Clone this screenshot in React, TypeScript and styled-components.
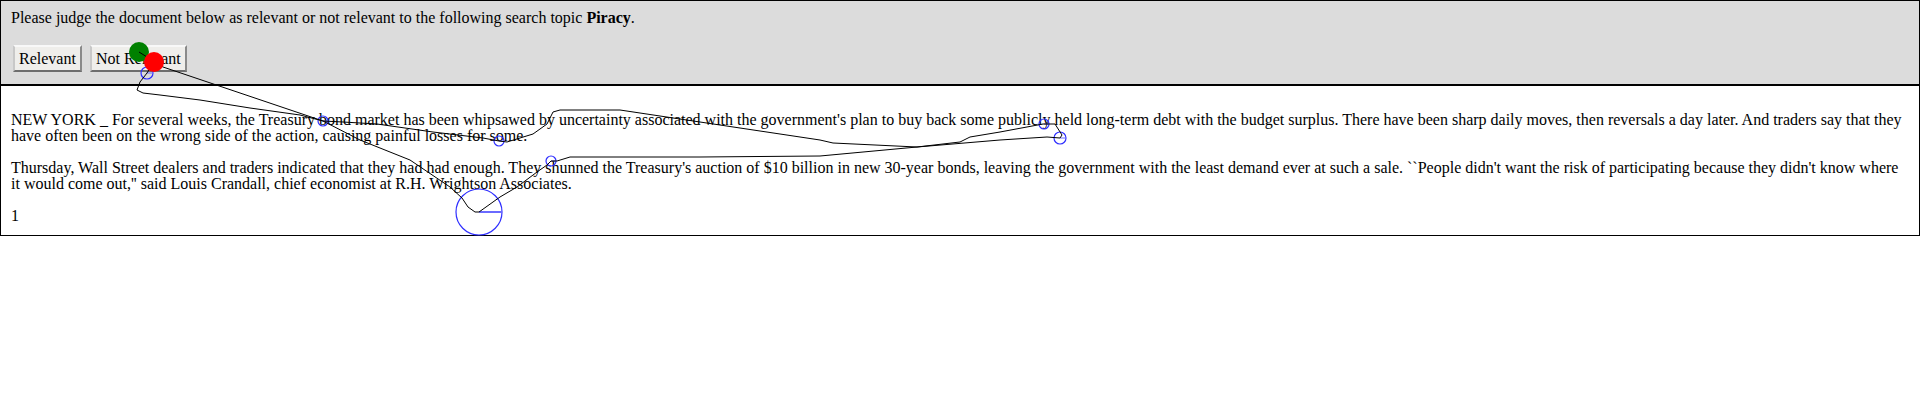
import React from "react";
import styled, { createGlobalStyle } from "styled-components";

const GlobalStyle = createGlobalStyle`
  html, body {
    margin: 0;
    padding: 0;
    background: #ffffff;
  }
  body {
    font-family: "Liberation Serif", "Times New Roman", serif;
    font-size: 16px;
    line-height: 16px;
    color: #000000;
  }
`;

const Page = styled.div`
  position: relative;
  width: 1920px;
  min-height: 411px;
`;

const JudgePanel = styled.div`
  background: #dcdcdc;
  border: 1px solid #000000;
  padding: 9px 10px 12px;
`;

const Prompt = styled.div`
  line-height: 16px;
`;

const ButtonRow = styled.div`
  display: flex;
  gap: 8px;
  margin-top: 19px;
  padding-left: 2px;
`;

const JudgeButton = styled.button`
  box-sizing: border-box;
  height: 27px;
  padding: 0 4px;
  font-family: "Liberation Serif", "Times New Roman", serif;
  font-size: 16px;
  line-height: 16px;
  color: #000000;
  background: #efeeeb;
  border: 2px solid;
  border-color: #f8f8f8 #8a8a8a #6e6e6e #c8c8c8;
  border-radius: 0;
  cursor: pointer;
`;

const DocPanel = styled.div`
  border: 1px solid #000000;
  padding: 10px 10px 11px;
`;

const Paragraph = styled.p`
  margin: 16px 0;
  line-height: 16px;
`;

const PageNumber = styled.div`
  margin-top: 2px;
  line-height: 16px;
`;

const Overlay = styled.svg`
  position: absolute;
  left: 0;
  top: 0;
  pointer-events: none;
  overflow: visible;
`;

type Pt = [number, number];

const trail: Pt[] = [
  [139, 52], [163, 67], [323, 121],
  [343, 122], [377, 124], [433, 132], [483, 138], [499, 141],
  [507, 142], [520, 138], [533, 134], [547, 124], [553, 112], [560, 110],
  [620, 110], [700, 122], [760, 131], [820, 140], [833, 143], [917, 147],
  [960, 142], [970, 137], [1000, 132], [1043, 124],
  [1055, 124], [1062, 135], [1060, 138],
  [1047, 137], [1000, 140], [917, 147], [820, 156], [700, 157], [637, 157],
  [570, 157], [557, 161], [551, 161],
  [547, 165], [537, 172], [517, 187], [500, 197], [479, 212],
  [475, 212], [468, 207], [462, 198], [450, 187], [410, 160], [360, 140], [323, 121],
  [300, 115], [250, 108], [200, 100], [160, 95], [143, 93], [137, 90], [140, 82],
  [147, 73], [154, 62],
];

const pauses: { x: number; y: number; r: number }[] = [
  { x: 147, y: 73, r: 6 },
  { x: 323, y: 121, r: 5 },
  { x: 499, y: 141, r: 5 },
  { x: 551, y: 161, r: 5 },
  { x: 1044, y: 124, r: 5 },
  { x: 1060, y: 138, r: 6 },
  { x: 479, y: 212, r: 23 },
];

const MouseTrail: React.FC = () => (
  <Overlay width={1920} height={411} viewBox="0 0 1920 411">
    <circle cx={139} cy={52} r={10} fill="#008000" />
    {pauses.map((p, i) => (
      <g key={i}>
        <circle cx={p.x} cy={p.y} r={p.r} fill="none" stroke="#2f2fff" strokeWidth={1.2} />
        <line
          x1={p.x}
          y1={p.y}
          x2={p.x + p.r}
          y2={p.y}
          stroke="#6a6aff"
          strokeWidth={p.r > 10 ? 2 : 1}
        />
      </g>
    ))}
    <polyline
      points={trail.map(([x, y]) => `${x},${y}`).join(" ")}
      fill="none"
      stroke="#000000"
      strokeWidth={1}
      strokeLinejoin="round"
    />
    <circle cx={154} cy={62} r={10} fill="#ff0000" />
  </Overlay>
);

export default function App() {
  return (
    <Page>
      <GlobalStyle />
      <JudgePanel>
        <Prompt>
          Please judge the document below as relevant or not relevant to the following search topic <b>Piracy</b>.
        </Prompt>
        <ButtonRow>
          <JudgeButton type="button">Relevant</JudgeButton>
          <JudgeButton type="button">Not Relevant</JudgeButton>
        </ButtonRow>
      </JudgePanel>
      <DocPanel>
        <Paragraph>
          NEW YORK _ For several weeks, the Treasury bond market has been whipsawed by uncertainty associated with the
          government's plan to buy back some publicly held long-term debt with the budget surplus. There have been sharp
          daily moves, then reversals a day later. And traders say that they have often been on the wrong side of the
          action, causing painful losses for some.
        </Paragraph>
        <Paragraph>
          Thursday, Wall Street dealers and traders indicated that they had had enough. They shunned the Treasury's auction
          of $10 billion in new 30-year bonds, leaving the government with the least demand ever at such a sale.
          ``People didn't want the risk of participating because they didn't know where it would come out,'' said Louis
          Crandall, chief economist at R.H. Wrightson Associates.
        </Paragraph>
        <PageNumber>1</PageNumber>
      </DocPanel>
      <MouseTrail />
    </Page>
  );
}
